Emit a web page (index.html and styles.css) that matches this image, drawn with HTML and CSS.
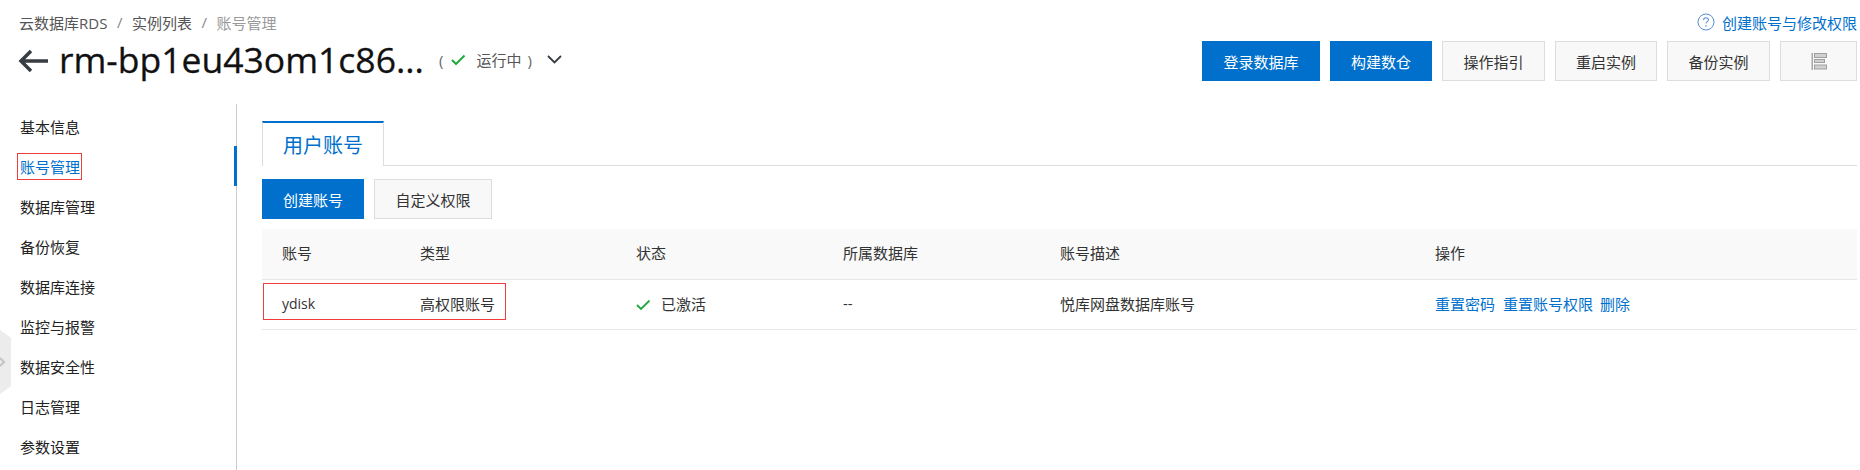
FILE: index.html
```html
<!DOCTYPE html>
<html lang="zh-CN">
<head>
  <meta charset="UTF-8">
  <title>账号管理</title>
  <link rel="stylesheet" href="styles.css">
</head>
<body>
  <header class="page-head">
    <div class="crumb-row">
      <div class="crumbs">
        <span>云数据库RDS</span><i>/</i><span>实例列表</span><i>/</i><span class="current">账号管理</span>
      </div>
      <a class="help-link" href="#">
        <svg width="18" height="18" viewBox="0 0 18 18"><circle cx="9" cy="9" r="8" fill="none" stroke="#5b8fd6"/><path d="M6.6 7c0-1.500 1-2.300 2.400-2.300S11.400 5.500 11.400 6.800c0 1.800-2.400 1.800-2.400 3.700" fill="none" stroke="#5b8fd6" stroke-width="1.100"/><circle cx="9" cy="13" r=".8" fill="#5b8fd6"/></svg>
        创建账号与修改权限
      </a>
    </div>
    <div class="title-row">
      <svg class="back" width="30" height="24" viewBox="0 0 30 24"><path d="M30 12H3M13 2 3 12l10 10" fill="none" stroke="#373d41" stroke-width="3.500"/></svg>
      <h1>rm-bp1eu43om1c86...</h1>
      <div class="status">
        <span>(</span>
        <svg class="check" width="15" height="10" viewBox="0 0 15 10"><path d="M1 5l4 4 8.500-8.500" fill="none" stroke="#1fa83c" stroke-width="2"/></svg>
        <span class="status-text">运行中</span>
        <span>)</span>
        <svg class="caret" width="15" height="9" viewBox="0 0 15 9"><path d="M1 1l6.500 6.500L14 1" fill="none" stroke="#373d41" stroke-width="1.800"/></svg>
      </div>
      <div class="actions">
        <button class="btn primary btn-lg">登录数据库</button>
        <button class="btn primary btn-sm">构建数仓</button>
        <button class="btn btn-md">操作指引</button>
        <button class="btn btn-sm">重启实例</button>
        <button class="btn btn-md">备份实例</button>
        <button class="btn icon-btn">
          <svg width="16" height="17" viewBox="0 0 16 17"><g fill="#d0d0d0" stroke="#a0a0a0"><rect x="3.500" y=".5" width="12" height="4"/><rect x="3.500" y="6.500" width="10" height="3"/><rect x="3.500" y="12" width="12" height="4"/></g><path d="M.5 0h1.500v17H.5z" fill="#a8a8a8"/></svg>
        </button>
      </div>
    </div>
  </header>

  <div class="layout">
    <nav class="side">
      <a>基本信息</a>
      <a class="active"><span class="mark">账号管理</span></a>
      <a>数据库管理</a>
      <a>备份恢复</a>
      <a>数据库连接</a>
      <a>监控与报警</a>
      <a>数据安全性</a>
      <a>日志管理</a>
      <a>参数设置</a>
    </nav>
    <main class="content">
      <div class="tabs"><div class="tab">用户账号</div></div>
      <div class="toolbar">
        <button class="btn primary">创建账号</button>
        <button class="btn btn-lg">自定义权限</button>
      </div>
      <div class="table-wrap">
        <table>
          <thead>
            <tr>
              <th class="c1">账号</th>
              <th class="c2">类型</th>
              <th class="c3">状态</th>
              <th class="c4">所属数据库</th>
              <th class="c5">账号描述</th>
              <th>操作</th>
            </tr>
          </thead>
          <tbody>
            <tr>
              <td class="name">ydisk</td>
              <td>高权限账号</td>
              <td><svg class="ok" width="15" height="10" viewBox="0 0 15 10"><path d="M1 5l4 4 8.500-8.500" fill="none" stroke="#1fa83c" stroke-width="1.800"/></svg>已激活</td>
              <td>--</td>
              <td>悦库网盘数据库账号</td>
              <td class="links"><a href="#">重置密码</a><a href="#">重置账号权限</a><a class="del" href="#">删除</a></td>
            </tr>
          </tbody>
        </table>
        <div class="row-mark"></div>
      </div>
    </main>
  </div>

  <div class="side-handle">
    <svg width="6" height="10" viewBox="0 0 6 10"><path d="M0 1l4 4-4 4" fill="none" stroke="#c4c4c4" stroke-width="2"/></svg>
  </div>
</body>
</html>
```

FILE: styles.css
```css
* { box-sizing: border-box; }
html, body { height: 100%; }
body { margin: 0; height: 470px; overflow: hidden; background: #fff; color: #333; font-family: "Open Sans", "Noto Sans CJK SC", sans-serif; font-size: 15px; position: relative; }
a { text-decoration: none; }

.page-head { padding: 10px 3px 0 18px; height: 104px; }
.crumb-row { display: flex; justify-content: space-between; align-items: center; height: 24px; padding-left: 1px; }
.crumbs { color: #555; display: flex; align-items: center; }
.crumbs i { font-style: normal; margin: 0 9.5px; color: #888; }
.crumbs .current { color: #999; }
.help-link { color: #0070cc; display: flex; align-items: center; gap: 7px; }
.title-row { display: flex; align-items: center; height: 40px; margin-top: 7px; }
.back { margin-right: 11px; flex: none; }
h1 { margin: 0; padding-bottom: 5px; font-size: 35.5px; font-weight: 400; color: #111; line-height: 40px; white-space: nowrap; -webkit-text-stroke: .3px #111; }
.status { display: flex; align-items: center; margin-left: 15px; padding-bottom: 3px; color: #666; }
.status .check { margin-left: 8px; }
.status-text { margin: 0 6px 0 10px; color: #555; }
.status .caret { margin-left: 15px; }
.actions { margin-left: auto; display: flex; gap: 10px; }

.btn { height: 40px; padding: 0 20px; border: 1px solid #ddd; background: #f8f8f8; color: #333; font: inherit; cursor: pointer; white-space: nowrap; }
.btn.primary { background: #0070cc; border-color: #0070cc; color: #fff; }
.btn-lg { width: 118px; padding: 0; }
.btn-md { width: 103px; padding: 0; }
.btn-sm { width: 102px; padding: 0; }
.icon-btn { width: 77px; display: flex; align-items: center; justify-content: center; padding: 0; }

.layout { display: flex; height: 366px; }
.side { width: 237px; flex: none; border-right: 1px solid #ccc; padding-top: 2px; }
.side a { display: flex; align-items: center; height: 40px; padding-left: 20px; color: #222; margin-right: -1px; }
.side a.active { color: #0070cc; border-right: 3px solid #0070cc; }
.mark { display: flex; align-items: center; width: 65px; height: 27px; border: 1px solid #f03c3c; padding-left: 2px; margin-left: -3px; }

.content { flex: 1; padding: 17px 3px 0 25px; }
.tabs { height: 45px; border-bottom: 1px solid #ddd; }
.tab { width: 122px; height: 45px; border: 1px solid #ddd; border-top: 2px solid #0070cc; border-bottom: 0; background: #fff; color: #0070cc; font-size: 20px; display: flex; align-items: center; justify-content: center; }
.toolbar { display: flex; gap: 10px; margin-top: 13px; }

.table-wrap { position: relative; margin-top: 10px; }
table { width: 100%; border-collapse: collapse; table-layout: fixed; }
th, td { padding: 0 0 2px 20px; text-align: left; font-weight: 400; color: #333; }
th { height: 50px; background: #f9f9f9; border-bottom: 1px solid #e6e6e6; }
td { height: 50px; border-bottom: 1px solid #e6e6e6; }
td.name { font-size: 14px; }
.c1 { width: 138px; }
.c2 { width: 216px; }
.c3 { width: 207px; }
.c4 { width: 217px; }
.c5 { width: 375px; }
.ok { margin-right: 10px; }
.links a { color: #0070cc; margin-right: 8px; }
.links .del { margin-left: -1px; }
.row-mark { position: absolute; left: 1px; top: 54px; width: 243px; height: 37px; border: 1px solid #f03c3c; }

.side-handle { position: absolute; left: 0; top: 330px; width: 11px; height: 64px; background: #ececec; clip-path: polygon(0 0, 100% 12%, 100% 88%, 0 100%); display: flex; align-items: center; }
```
